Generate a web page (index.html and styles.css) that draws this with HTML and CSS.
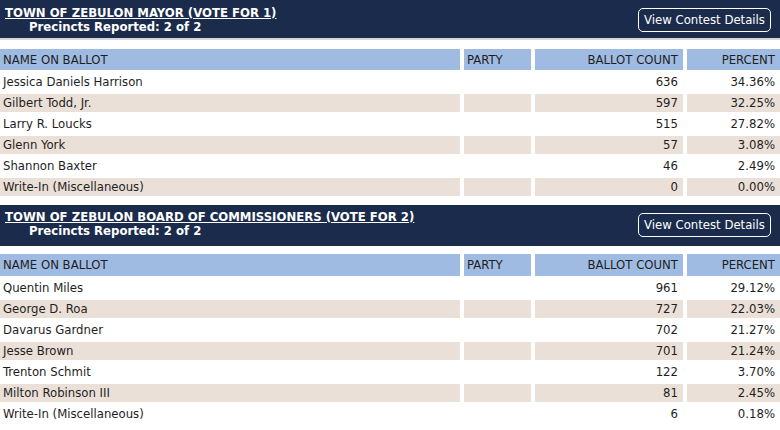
FILE: index.html
```html
<!DOCTYPE html>
<html lang="en">
<head>
<meta charset="utf-8">
<title>Election Results</title>
<link rel="stylesheet" href="styles.css">
</head>
<body>
<main class="page">
  <section class="contest contest-first">
    <header class="contest-head">
      <div class="contest-title">
        <a class="contest-name" href="#">TOWN OF ZEBULON MAYOR (VOTE FOR 1)</a>
        <div class="precincts">Precincts Reported: 2 of 2</div>
      </div>
      <button class="details-btn" type="button">View Contest Details</button>
    </header>
    <table class="results">
      <colgroup>
        <col>
        <col class="c-party">
        <col class="c-count">
        <col class="c-pct">
      </colgroup>
      <thead>
        <tr><th>NAME ON BALLOT</th><th>PARTY</th><th class="num">BALLOT COUNT</th><th class="num">PERCENT</th></tr>
      </thead>
      <tbody>
        <tr><td>Jessica Daniels Harrison</td><td></td><td class="num">636</td><td class="num">34.36%</td></tr>
        <tr><td>Gilbert Todd, Jr.</td><td></td><td class="num">597</td><td class="num">32.25%</td></tr>
        <tr><td>Larry R. Loucks</td><td></td><td class="num">515</td><td class="num">27.82%</td></tr>
        <tr><td>Glenn York</td><td></td><td class="num">57</td><td class="num">3.08%</td></tr>
        <tr><td>Shannon Baxter</td><td></td><td class="num">46</td><td class="num">2.49%</td></tr>
        <tr><td>Write-In (Miscellaneous)</td><td></td><td class="num">0</td><td class="num">0.00%</td></tr>
      </tbody>
    </table>
  </section>
  <section class="contest">
    <header class="contest-head">
      <div class="contest-title">
        <a class="contest-name" href="#">TOWN OF ZEBULON BOARD OF COMMISSIONERS (VOTE FOR 2)</a>
        <div class="precincts">Precincts Reported: 2 of 2</div>
      </div>
      <button class="details-btn" type="button">View Contest Details</button>
    </header>
    <table class="results">
      <colgroup>
        <col>
        <col class="c-party">
        <col class="c-count">
        <col class="c-pct">
      </colgroup>
      <thead>
        <tr><th>NAME ON BALLOT</th><th>PARTY</th><th class="num">BALLOT COUNT</th><th class="num">PERCENT</th></tr>
      </thead>
      <tbody>
        <tr><td>Quentin Miles</td><td></td><td class="num">961</td><td class="num">29.12%</td></tr>
        <tr><td>George D. Roa</td><td></td><td class="num">727</td><td class="num">22.03%</td></tr>
        <tr><td>Davarus Gardner</td><td></td><td class="num">702</td><td class="num">21.27%</td></tr>
        <tr><td>Jesse Brown</td><td></td><td class="num">701</td><td class="num">21.24%</td></tr>
        <tr><td>Trenton Schmit</td><td></td><td class="num">122</td><td class="num">3.70%</td></tr>
        <tr><td>Milton Robinson III</td><td></td><td class="num">81</td><td class="num">2.45%</td></tr>
        <tr><td>Write-In (Miscellaneous)</td><td></td><td class="num">6</td><td class="num">0.18%</td></tr>
      </tbody>
    </table>
  </section>
</main>
</body>
</html>
```

FILE: styles.css
```css
html, body {
  margin: 0;
  padding: 0;
  background: #ffffff;
}
body {
  font-family: "DejaVu Sans Condensed", "DejaVu Sans", Verdana, sans-serif;
  font-size: 13px;
  color: #1e1e1e;
  overflow: hidden;
}
.page {
  width: 780px;
}
.contest {
  margin-top: 5.6px;
}
.contest-first {
  margin-top: 0;
}
.contest-head {
  background: #1a2b4b;
  color: #ffffff;
  height: 41px;
  box-sizing: border-box;
  padding: 5.5px 9px 0 5px;
  display: flex;
  justify-content: space-between;
  align-items: flex-start;
}
.contest-first .contest-head {
  height: 38px;
  border-bottom: 2px solid #d4d9e0;
  height: 40px;
  background-clip: padding-box;
}
.contest-title {
  line-height: 14px;
  font-weight: bold;
}
.contest-name {
  color: #ffffff;
  text-decoration: underline;
  display: block;
}
.precincts {
  padding-left: 24px;
}
.details-btn {
  align-self: center;
  margin-top: -5px;
  height: 24px;
  width: 133px;
  padding: 0;
  background: transparent;
  color: #ffffff;
  border: 1px solid #ffffff;
  border-radius: 5px;
  font-family: inherit;
  font-size: 13px;
  line-height: 20px;
}
.contest-first .details-btn {
  margin-top: -4px;
}
.results {
  width: 788px;
  margin: 5.5px -4px 0 -4px;
  border-collapse: separate;
  border-spacing: 4px 3.3px;
  table-layout: fixed;
}
.c-party { width: 67px; }
.c-count { width: 148px; }
.c-pct { width: 93px; }
.results th {
  background: #a0bbe2;
  font-weight: normal;
  text-align: left;
  height: 21.5px;
  padding: 0 4px 0 3px;
  line-height: 21.5px;
}
.results td {
  height: 18px;
  line-height: 18px;
  padding: 0 4px 0 3px;
  white-space: nowrap;
}
.results tbody tr:nth-child(even) td {
  background: #ebe0d7;
}
.results .num {
  text-align: right;
  padding-right: 5px;
}
```
